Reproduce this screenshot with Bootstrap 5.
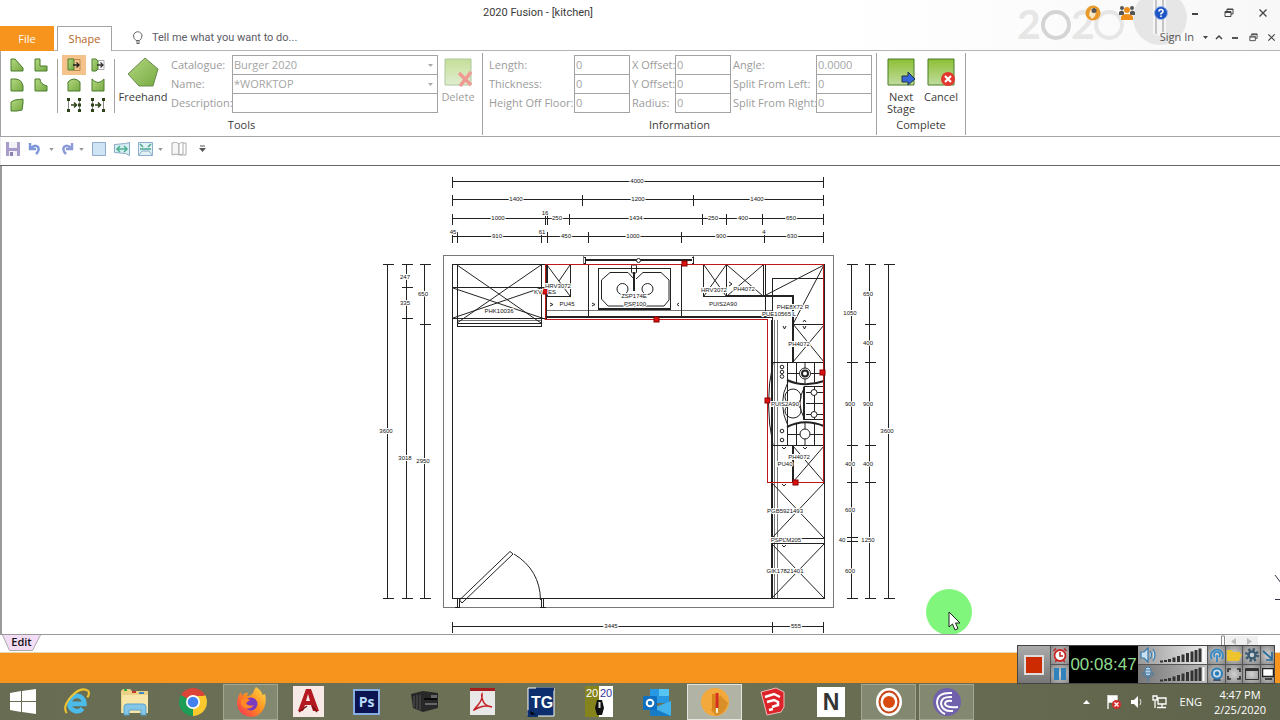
<!DOCTYPE html>
<html lang="en">
<head>
<meta charset="utf-8">
<meta name="viewport" content="width=device-width, initial-scale=1">
<title>2020 Fusion - [kitchen]</title>
<link rel="stylesheet" href="https://cdn.jsdelivr.net/npm/bootstrap@5.3.0/dist/css/bootstrap.min.css">
<style>
:root{--line:#a3a3a3;--dim:#9b9b9b;--orange:#f7941d}
body{font-family:"Open Sans","Noto Sans",sans-serif;font-size:11px;line-height:16px;color:#3b3b3b;background:#fff}
button{font:inherit;color:inherit;background:none;border:0;padding:0;display:inline-flex;align-items:center;justify-content:center;flex-shrink:0}
a{color:inherit;text-decoration:none}
svg{display:block;flex-shrink:0}
.app-head{background:linear-gradient(90deg,#fff 65%,#f8f8f8);position:relative}
.title-row{height:26px}
.title-row .win-title{flex:1;text-align:center}
.win-title,.tell-me{font-family:Roboto,"Open Sans",sans-serif}
.title-row button{width:34px;height:24px}
.watermark{position:absolute;right:90px;top:0}
.tab-row{height:25px;border-bottom:1px solid #b5b5b5}
.tab-file{width:54px;height:25px;background:var(--orange);color:#fff}
.tab-shape{width:55px;height:25px;margin:0 0 -1px 3px;background:#fff;border:1px solid var(--line);border-bottom:0;color:#b5651d}
.tell-me{margin-left:20px;color:#5c5c66}
.tell-me svg{margin-right:4px}
.sign{color:#555}
.sign button{height:22px}
.w14{width:14px}.w18{width:18px}
.ribbon{height:86px;border-bottom:1px solid var(--line);border-left:1px solid var(--line)}
.r-group{position:relative;height:82px;margin-top:2px;border-right:1px solid var(--line);display:flex;flex-direction:column;flex-shrink:0}
.r-body{height:64px;padding-top:2px;display:flex;align-items:flex-start}
.r-label{text-align:center;height:16px}
.tool-grid{display:grid;grid-template-columns:24px 24px;grid-auto-rows:20px}
.tool-grid button{height:20px;width:24px}
.tool-grid .picked{background:#f6c28b}
.v-rule{width:1px;height:54px;background:var(--line);margin-top:4px;flex-shrink:0}
.big-btn{width:40px;flex-direction:column;line-height:12px;justify-content:flex-start;padding-top:2px}
.big-btn svg{margin-bottom:4px}
.big-btn.wide{width:56px}
.field-grid{display:grid;grid-auto-rows:19px;align-items:start;color:var(--dim)}
.field-grid label{line-height:20px;white-space:nowrap}
.field-grid input,.field-grid select{height:20px;width:100%;border:1px solid var(--line);border-radius:0;background:#fff;color:#a5a5a5;padding:0 1px 1px;font:inherit;appearance:none;opacity:1;min-width:0}
.field-grid select{background:#fff url("data:image/svg+xml,%3Csvg xmlns='http://www.w3.org/2000/svg' width='5' height='3'%3E%3Cpath d='M0 0h5L2.500 3z' fill='%23aaa'/%3E%3C/svg%3E") no-repeat right 4px center}
.f-tools{grid-template-columns:61px 206px}
.f-info{grid-template-columns:85px 56px 2px 43px 56px 2px 83px 56px;margin:0 4px 0 6px}
.quick{height:28px;padding:0 5px 4px;border-left:1px solid #eee}
.quick button{height:24px}
.stage{border-top:1px solid #666;border-bottom:1px solid #999;box-shadow:inset 2px 0 #999;position:relative;overflow:hidden;flex:1 0 auto}
.plan{width:100%;height:max(467px,calc(100vh - 253px))}
.plan line,.plan path,.plan rect,.plan circle,.plan ellipse{fill:none;stroke:#222;stroke-width:1}
.plan .crisp *{shape-rendering:crispEdges}
.plan .thin *{stroke:#777}
.plan .diag *{stroke:#222}
.plan .bold *{stroke:#222;stroke-width:2}
.plan .red *{stroke:#c01818}
.plan .grip *{fill:#e01010;stroke:#800}
.plan text{font-family:"Liberation Sans",sans-serif;font-size:6px;fill:#111;text-anchor:middle;paint-order:stroke;stroke:#fff;stroke-width:2px}
.pointer{position:absolute;right:307px;bottom:-2px}
.edge-bit{position:absolute;right:0;bottom:30px}
.sheets{height:17px;padding-left:2px}
.sheet-tab{width:39px;height:17px;color:#111;font-weight:600}
.sheet-tab svg{position:absolute;left:0;top:0}
.sheet-tab span{position:relative;top:-2px}
.scroll-bit{margin-right:22px}
.orange-bar{height:31px;background:var(--orange);border-top:1px solid #e6d9b8}
.task{height:37px;background:linear-gradient(90deg,#686c53,#6e7256 50%,#5e634b);color:#fff}
.task .start{width:46px;margin-right:3px}
.task .apps{gap:3px}
.task .apps button{width:55px;height:36px;border:1px solid transparent}
.task .apps .open{background:#838870;border-color:#a3a792}
.task .apps .front{background:#b1b4a5;border-color:#e4e5df}
.clock{width:52px;line-height:15px;text-align:center;margin-right:14px}
.recorder{position:absolute;right:5px;bottom:36px;height:39px;border:1px solid #444;background:#555}
.recorder button,.meter{background:radial-gradient(#d2d2d2,#858585)}
.rec-stop{width:33px;background:linear-gradient(#aaa,#777)!important;border-right:1px solid #555}
.rec-duo{display:grid;grid-template-rows:18px 18px;gap:1px}
.rec-duo button{width:18px}
.lcd{width:69px;background:#000;color:#90dc90;font:17px/37px "Liberation Sans",sans-serif;text-align:center}
.meter{width:69px;padding-left:2px;display:flex;align-items:center}
.meter.loud{background:linear-gradient(90deg,#999,#eee)}
.meter.mic{background:linear-gradient(90deg,#777,#bbb)}
.rec-grid{display:grid;grid-template:18px 18px/17px 16px 17px 13px;gap:1px;margin-left:1px;overflow:hidden}
</style>
</head>
<body>
<svg width="0" height="0" class="position-absolute" aria-hidden="true">
<defs>
<linearGradient id="gr" x1="0" y1="0" x2="1" y2="1"><stop offset="0" stop-color="#b4d880"/><stop offset="1" stop-color="#76aa43"/></linearGradient>
<linearGradient id="sq" x1="0" y1="0" x2="0" y2="1"><stop offset="0" stop-color="#8dbf35"/><stop offset="1" stop-color="#c1dc9f"/></linearGradient>
<linearGradient id="ff" x1="1" y1="0" x2="0" y2="1"><stop offset="0" stop-color="#ffe14a"/><stop offset=".5" stop-color="#ff8a1e"/><stop offset="1" stop-color="#ef2a5e"/></linearGradient>
<symbol id="restore" viewBox="0 0 10 10"><path d="M3 3V1h6v5H7M1 3.500h6v5H1zM1 4.500h6M3 1.500h6" fill="none" stroke="#444"/></symbol>
<symbol id="cross" viewBox="0 0 10 10"><path d="M1.500 1.500l7 7m0-7l-7 7" fill="none" stroke="#444" stroke-width="1.300"/></symbol>
<symbol id="caret" viewBox="0 0 6 4"><path d="M0 0h6L3 4z" fill="#999"/></symbol>
</defs>
</svg>
<div class="d-flex flex-column min-vh-100 position-relative">

<header class="app-head">
  <svg class="watermark" width="190" height="50" viewBox="1000 0 190 50" aria-hidden="true">
    <circle cx="1160" cy="18" r="27" fill="#e6e6e6"/><path d="M1153 0h13v38l-13-4z" fill="#f5f5f5"/><path d="M1156 0v34M1163 0v32" stroke="#c4c4c4" stroke-width="2"/>
    <g font-family="Lato,sans-serif" font-size="41" font-weight="700" fill="#e6e6e6"><text x="1017" y="39">2</text><text x="1071" y="39">2</text></g>
    <circle cx="1056" cy="25" r="13" fill="none" stroke="#d4d4d4" stroke-width="4"/><circle cx="1109" cy="25" r="13" fill="none" stroke="#e6e6e6" stroke-width="4"/>
  </svg>
  <div class="title-row d-flex align-items-center position-relative">
    <div class="win-title">2020 Fusion - [kitchen]</div>
    <button aria-label="Announcements"><svg width="16" height="16" viewBox="0 0 16 16"><circle cx="8" cy="8" r="7.500" fill="#e99a2b"/><path d="M7 3h4v4l-1 4-3 3-3-4 1-4z" fill="#f8e6c4"/><circle cx="9" cy="5.500" r="2.500" fill="#555"/></svg></button>
    <button aria-label="Community"><svg width="16" height="16" viewBox="0 0 16 16"><g fill="#555"><circle cx="3" cy="3" r="2"/><circle cx="13" cy="3" r="2"/><path d="M0 10V7q3-3 5 0v3zM11 10V7q2-3 5 0v3z"/></g><circle cx="8" cy="5" r="3" fill="#ee8f1c"/><path d="M2 15v-3q1-3 6-3t6 3v3z" fill="#ee8f1c"/></svg></button>
    <button aria-label="Help"><svg width="14" height="14" viewBox="0 0 14 14"><circle cx="7" cy="7" r="6.500" fill="#1d55c4" stroke="#9db8ea"/><path d="M5 5.500q0-2 2-2t2 1.700Q9 6.500 7 7.500v1M7 9.500v1.500" fill="none" stroke="#fff" stroke-width="1.600"/></svg></button>
    <button aria-label="Minimize"><svg width="6" height="6"><path d="M0 4h6" stroke="#444" stroke-width="2"/></svg></button>
    <button aria-label="Restore"><svg width="10" height="10"><use href="#restore"/></svg></button>
    <button aria-label="Close"><svg width="10" height="10"><use href="#cross"/></svg></button>
  </div>
  <nav class="tab-row d-flex align-items-start position-relative">
    <button class="tab-file">File</button>
    <button class="tab-shape">Shape</button>
    <button class="tell-me align-self-center"><svg width="12" height="14" viewBox="0 0 12 14"><path d="M4 9.500Q1.500 7.500 1.500 5a4.200 4.200 0 0 1 8.500 0q0 2.500-2.500 4.500zM4 11h4M4.500 12.500h3" fill="none" stroke="#666"/></svg><span class="ms-1">Tell me what you want to do...</span></button>
    <div class="sign ms-auto d-flex align-items-center">
      <a href="#" class="me-1">Sign In</a>
      <button class="w14" aria-label="Account menu"><svg width="5" height="3"><path d="M0 0h5L2.500 3z" fill="#444"/></svg></button>
      <button class="w14" aria-label="Collapse ribbon"><svg width="8" height="6"><path d="M1 5l3-3 3 3" fill="none" stroke="#444" stroke-width="1.500"/></svg></button>
      <button class="w18" aria-label="Minimize drawing"><svg width="6" height="6"><path d="M0 4h6" stroke="#555" stroke-width="2"/></svg></button>
      <button class="w18" aria-label="Restore drawing"><svg width="9" height="9"><use href="#restore"/></svg></button>
      <button class="w18" aria-label="Close drawing"><svg width="9" height="9"><use href="#cross"/></svg></button>
    </div>
  </nav>
</header>

<section class="ribbon d-flex">
  <div class="r-group">
    <div class="r-body pe-1">
      <div class="tool-grid ms-1">
        <button aria-label="Angled corner"><svg width="14" height="14" viewBox="0 0 14 14"><path d="M1 1h4l8 9v3H1z" fill="url(#gr)" stroke="#4b7c2c"/></svg></button>
        <button aria-label="L shape"><svg width="14" height="14" viewBox="0 0 14 14"><path d="M1 1h5v7h7v5H1z" fill="url(#gr)" stroke="#4b7c2c"/></svg></button>
        <button aria-label="Round corner"><svg width="14" height="14" viewBox="0 0 14 14"><path d="M1 1h5q6 1 7 7v5H1z" fill="url(#gr)" stroke="#4b7c2c"/></svg></button>
        <button aria-label="Scooped corner"><svg width="14" height="14" viewBox="0 0 14 14"><path d="M1 1h5q0 5 7 7v5H1z" fill="url(#gr)" stroke="#4b7c2c"/></svg></button>
        <button aria-label="Free edge"><svg width="14" height="14" viewBox="0 0 14 14"><path d="M1 4l4-2 8-1v4l-1 7-5 1H1z" fill="url(#gr)" stroke="#4b7c2c"/></svg></button>
      </div>
      <div class="v-rule ms-1"></div>
      <div class="tool-grid ms-1">
        <button class="picked" aria-label="Extend side"><svg width="14" height="14" viewBox="0 0 14 14"><path d="M1 1h6v11H1z" fill="url(#gr)" stroke="#4b7c2c"/><path d="M7 1.500h6v11H7" fill="none" stroke="#b88a50"/><path d="M6 7h6M9.500 4.500L12 7 9.500 9.500" fill="none" stroke="#222" stroke-width="1.300"/></svg></button>
        <button aria-label="Extend angled side"><svg width="14" height="14" viewBox="0 0 14 14"><path d="M1 1h4l2 2v8l-2 2H1z" fill="url(#gr)" stroke="#4b7c2c"/><path d="M7 2.500h6v9H7" fill="none" stroke="#aaa"/><path d="M6 7h6M9.500 4.500L12 7 9.500 9.500" fill="none" stroke="#333" stroke-width="1.300"/></svg></button>
        <button aria-label="Convex edge"><svg width="14" height="14" viewBox="0 0 14 14"><path d="M1 13V4q6-6 12 0v9z" fill="url(#gr)" stroke="#4b7c2c"/></svg></button>
        <button aria-label="Concave edge"><svg width="14" height="14" viewBox="0 0 14 14"><path d="M1 13V1q6 7 12 0v12z" fill="url(#gr)" stroke="#4b7c2c"/></svg></button>
        <button aria-label="Move points"><svg width="14" height="14" viewBox="0 0 14 14"><path d="M1.500 1v12M12.500 1v12" stroke="#888"/><path d="M4 7h5M7 4.500L9.500 7 7 9.500" fill="none" stroke="#2d4319" stroke-width="1.500"/><path d="M0 0h3v3H0zM0 11h3v3H0zM11 0h3v3h-3zM11 11h3v3h-3zM11 5.500h3v3h-3z" fill="#2d4319"/></svg></button>
        <button aria-label="Move side"><svg width="14" height="14" viewBox="0 0 14 14"><path d="M1.500 1v12M12.500 1v12" stroke="#888"/><path d="M4 7h5M7 4.500L9.500 7 7 9.500" fill="none" stroke="#2d4319" stroke-width="1.500"/><path d="M0 0h3v3H0zM0 11h3v3H0zM11 0h3v3h-3zM11 11h3v3h-3zM0 5.500h3v3H0z" fill="#2d4319"/></svg></button>
      </div>
      <div class="v-rule ms-1"></div>
      <button class="big-btn wide"><svg width="32" height="30" viewBox="0 0 32 30"><path d="M18 1L31 12 26 29H12L1 17z" fill="url(#gr)" stroke="#6a8a50"/></svg>Freehand</button>
      <div class="field-grid f-tools">
        <label for="cat">Catalogue:</label><select id="cat" disabled><option>Burger 2020</option></select>
        <label for="nam">Name:</label><select id="nam" disabled><option>*WORKTOP</option></select>
        <label for="des">Description:</label><input id="des" disabled>
      </div>
      <button class="big-btn opacity-50"><svg width="28" height="30" viewBox="0 0 28 30"><path d="M1 2h26v26H1z" fill="url(#sq)" stroke="#5f9040"/><path d="M15 16l12 12M27 15L16 29" stroke="#e0362e" stroke-width="3.500"/></svg>Delete</button>
    </div>
    <div class="r-label">Tools</div>
  </div>
  <div class="r-group">
    <div class="r-body">
      <div class="field-grid f-info">
        <label for="len">Length:</label><input id="len" value="0" disabled><i></i>
        <label for="xo">X Offset:</label><input id="xo" value="0" disabled><i></i>
        <label for="ang">Angle:</label><input id="ang" value="0.0000" disabled>
        <label for="thi">Thickness:</label><input id="thi" value="0" disabled><i></i>
        <label for="yo">Y Offset:</label><input id="yo" value="0" disabled><i></i>
        <label for="sl">Split From Left:</label><input id="sl" value="0" disabled>
        <label for="hof">Height Off Floor:</label><input id="hof" value="0" disabled><i></i>
        <label for="rad">Radius:</label><input id="rad" value="0" disabled><i></i>
        <label for="sr">Split From Right:</label><input id="sr" value="0" disabled>
      </div>
    </div>
    <div class="r-label">Information</div>
  </div>
  <div class="r-group">
    <div class="r-body px-1">
      <button class="big-btn"><svg width="28" height="30" viewBox="0 0 28 30"><path d="M1 2h26v26H1z" fill="url(#sq)" stroke="#467c27"/><path d="M15 19h6v-4l7 7-7 6v-3h-6z" fill="#3567d6" stroke="#234"/></svg>Next<br>Stage</button>
      <button class="big-btn"><svg width="28" height="30" viewBox="0 0 28 30"><path d="M1 2h26v26H1z" fill="url(#sq)" stroke="#467c27"/><circle cx="21" cy="22" r="7" fill="#e2372c"/><path d="M18 19l6 6m0-6l-6 6" stroke="#fff" stroke-width="2.200"/></svg>Cancel</button>
    </div>
    <div class="r-label">Complete</div>
  </div>
</section>

<nav class="quick d-flex align-items-center" aria-label="Quick access">
  <button class="w14" aria-label="Save"><svg width="14" height="14" viewBox="0 0 14 14"><path d="M0 0h14v14H0z" fill="#a99cc8"/><path d="M3 0h8v6H3zM3 9h8v5H3z" fill="#f3f1f8"/><path d="M4 10h3v4H4z" fill="#8c80b0"/></svg></button>
  <button class="ms-2" aria-label="Undo"><svg width="14" height="14" viewBox="0 0 14 14"><path d="M2 1v6h6M3 6q4-4 7-1 2 3-2 7" fill="none" stroke="#7f98d8" stroke-width="2.500"/></svg></button>
  <button class="w18" aria-label="Undo list"><svg width="5" height="3"><use href="#caret"/></svg></button>
  <button aria-label="Redo"><svg width="14" height="14" viewBox="0 0 14 14"><path d="M12 1v6H6M11 6q-4-4-7-1-2 3 2 7" fill="none" stroke="#8b9cd8" stroke-width="2.500"/></svg></button>
  <button class="w14" aria-label="Redo list"><svg width="5" height="3"><use href="#caret"/></svg></button>
  <button class="ms-1" aria-label="Zoom window"><svg width="14" height="14" viewBox="0 0 14 14"><path d="M.5.5h13v13H.5z" fill="#cfe4f5" stroke="#8fa9cf"/></svg></button>
  <button class="ms-2" aria-label="Pan"><svg width="16" height="14" viewBox="0 0 16 14"><path d="M.5 2.500l11-1 4-1v13l-4-2-11-1z" fill="#d5eef0" stroke="#8aa9c4"/><path d="M3 7h9M6 4L3 7l3 3M10 4l3 3-3 3" fill="none" stroke="#4cae93" stroke-width="1.500"/></svg></button>
  <button class="ms-2" aria-label="Zoom extents"><svg width="15" height="14" viewBox="0 0 15 14"><path d="M.5.500h14v13H.5z" fill="#e2f2f4" stroke="#8aaecb"/><path d="M2 2l3 3m8-3l-3 3M2 7h11" fill="none" stroke="#4aa68f" stroke-width="1.500"/><path d="M1 13l3-4h7l3 4" fill="none" stroke="#8aaecb"/></svg></button>
  <button class="w14" aria-label="Zoom list"><svg width="5" height="3"><use href="#caret"/></svg></button>
  <button class="ms-1" aria-label="Catalogue"><svg width="16" height="14" viewBox="0 0 16 14"><path d="M1 1l4-1 3 2v11l-3-1-4 1z" fill="#f6f6f6" stroke="#aaa"/><path d="M8 2l3-2h1v12l-4 1zM12 1h3v12H9" fill="#fff" stroke="#aaa"/></svg></button>
  <button class="ms-2 ps-1" aria-label="Customize"><svg width="7" height="8"><path d="M1 1h5" stroke="#555"/><path d="M0 3h7L3.500 7z" fill="#555"/></svg></button>
</nav>

<main class="stage">
<svg class="plan" viewBox="375 166 530 467" preserveAspectRatio="xMidYMin meet" role="img" aria-label="Kitchen plan">
  <g class="crisp thin"><rect x="443.500" y="255.500" width="390" height="352"/><path d="M547 310.500H772M777.500 320V598M774.500 320V598M457 320.500H541M583.500 255v9M693.500 255v9"/></g>
  <g class="crisp">
    <path d="M452.500 264.500H824.500V598.500H452.500z"/>
    <path d="M457.500 264V326.500H541.500V264M453 287.500H545M453 318.500H545M457 323.500H541M547.500 264.500V296.500H570.500V264M588.500 264V317M681.500 264V317M703.500 264V296.500H727M726.500 264V296M763.500 264V296M765.500 264V313M772.500 598V278.500H824M793 324.500H824M772 362.500H824M772 445.500H824M772 482.500H824M772 538.500H824M772 543.500H824M787.500 363V445M583.500 257h2v6h-2M691.500 257h2v6h-2"/>
    <path d="M598.500 309V268.500H670.500V309"/>
  </g>
  <g class="crisp bold"><path d="M585 260H692M547 317H772M598 309H671M727 296H793V363M793 446V482M772 320V598M634 272V291M546 264V320"/></g>
  <g class="diag">
    <path d="M457 265L541 323M541 265L457 323M453 288L545 319M453 318L541 288M547 265L570 296M570 265L559 281M704 265L726 296M726 265L704 296M727 265L763 296M763 265L727 296M764 296L824 265L793 324L824 362M824 325L793 362M793 446L824 482M824 446L793 482M772 483L824 538M824 483L772 538M772 544L824 598M824 544L772 598"/>
    <path d="M601.500 280L610 272.500H628L634 279M601.500 280V299L608 306H664L669 300V280L661 272.500H643L636 279"/>
    <circle cx="622.500" cy="289" r="5.500"/><circle cx="647.500" cy="289" r="5.500"/><rect x="631.500" y="265" width="5" height="8" rx="1"/>
  </g>
  <circle cx="638.500" cy="260.500" r="2" style="fill:#fff"/>
  <!-- hob -->
  <g class="diag">
    <path d="M796.500 363V383M814.500 363V382M805 363V383M787 373.500H824M787 434.500H824M796.500 424V445M805 422V445M814.500 386V420M814.500 424V445M806 392.500H824M806 403.500H824M806 414.500H824M824 386.500H804V419.500H824"/>
    <circle cx="805" cy="373.500" r="5.500" style="fill:#fff"/><circle cx="805" cy="373.500" r="3" style="stroke-width:2"/><circle cx="805" cy="434" r="5" style="fill:#fff"/>
    <circle cx="814" cy="392.500" r="3" style="fill:#fff"/><circle cx="814" cy="414.500" r="3" style="fill:#fff"/>
    <ellipse cx="793" cy="397" rx="8" ry="8"/><ellipse cx="793" cy="411" rx="8" ry="7"/>
    <path d="M788 382Q777 403 788 426M773 363Q764 403 773 445M804 388Q796 403 804 418"/>
    <circle cx="782" cy="367" r="1.800"/><circle cx="782" cy="372" r="1.800"/><circle cx="782" cy="376.500" r="1.800"/><circle cx="782" cy="431" r="1.800"/><circle cx="782" cy="440" r="1.800"/>
  </g>
  <g class="bold"><path d="M787 380Q804 388 824 381M787 427Q804 418 824 426M804 387V420"/></g>
  <path d="M550 303l3 1.500-3 1.500M592 303l3 1.500-3 1.500M679 303l-2 1.500 2 1.500M729 282l3 2-3 2M783 326l1.500 3 1.500-3M803 322l1.500-2 1.500 2M803 326l1.500 3 1.500-3M782 447l2 2 2-2M803 447l2 2 2-2M782 484l2 2 2-2M782 545l2 2 2-2"/>
  <!-- door -->
  <g class="diag"><path d="M459.500 600L510 551.500L513 554L462 603zM514 554Q540 570 540.500 600"/></g>
  <g class="crisp"><path d="M455 598.500h5M455 607.500h5M457.500 598v10M459 598v10M540 598.500h5M540 607.500h6M541.500 598v10M543.500 598v10"/></g>
  <g class="crisp red"><path d="M545.500 264.500H823.500V482.500H767.500V319.500H545.500z"/></g>
  <g class="grip"><rect x="682" y="261" width="5" height="5"/><rect x="543" y="289" width="5" height="5"/><rect x="654" y="317" width="5" height="5"/><rect x="820" y="370" width="5" height="5"/><rect x="765" y="398" width="5" height="5"/><rect x="793" y="480" width="5" height="5"/></g>
  <g id="dims" class="crisp"></g>
  <g>
    <text x="499" y="313">PHK10036</text><text x="538" y="294">KV</text><text x="552" y="294">ES</text><text x="558" y="288">HRV3072</text><text x="567" y="306">PU45</text><text x="634" y="298">ZSP174E</text><text x="635" y="306">PSP100</text><text x="723" y="306">PUIS2A90</text><text x="714" y="292">HRV3072</text><text x="744" y="291">PH4072</text><text x="793" y="309">PHE8X72 R</text><text x="779" y="316">PUE10565 L</text><text x="799" y="346">PH4072</text><text x="785" y="406">PUIS2A90</text><text x="799" y="459">PH4072</text><text x="785" y="466">PU40</text><text x="785" y="513">PGB5921493</text><text x="786" y="542">PSPLM205</text><text x="785" y="573">GIK17821401</text>
  </g>
</svg>
<svg class="pointer" width="48" height="48" viewBox="0 0 48 48" aria-hidden="true"><circle cx="24" cy="24" r="23" fill="#80f77c"/><path d="M24 24v15l3.500-3 2.500 6 3-1.500-2.500-5.500h4.500z" fill="#fff" stroke="#222"/></svg>
<svg class="edge-bit" width="6" height="34" aria-hidden="true"><path d="M1 5l6 8M1 29.500h5" stroke="#334" fill="none"/></svg>
</main>

<div class="sheets d-flex justify-content-between">
  <button class="sheet-tab position-relative"><svg width="39" height="17"><path d="M.5 0l7 15.500h23l8-15.500" fill="#f3dcf5" stroke="#aaa"/></svg><span>Edit</span></button>
  <svg class="scroll-bit" width="37" height="12" aria-hidden="true"><path d="M.5 1h3v11h-3z" fill="#fff" stroke="#888"/><path d="M5 1h32v11H5z" fill="#f0f0f0"/><path d="M15 3v7l-5-3.500zM26 3v7l5-3.500z" fill="#bbb"/></svg>
</div>
<div class="orange-bar"></div>

<div class="recorder d-flex" role="toolbar" aria-label="Recorder">
  <button class="rec-stop" aria-label="Stop"><svg width="20" height="20"><path d="M1 1h18v18H1z" fill="#cc2a00" stroke="#ddd" stroke-width="2"/></svg></button>
  <div class="rec-duo">
    <button aria-label="Schedule"><svg width="16" height="16" viewBox="0 0 16 16"><circle cx="8" cy="8.500" r="5.500" fill="#fff" stroke="#c22" stroke-width="1.800"/><path d="M8 5v4h3M1.500 4L4 1.500M12 1.500L14.500 4M3 15l2-2m8 2l-2-2" stroke="#b22" stroke-width="1.500" fill="none"/></svg></button>
    <button aria-label="Pause"><svg width="12" height="12"><path d="M0 0h5v12H0zM7 0h5v12H7z" fill="#3181ba"/></svg></button>
  </div>
  <div class="lcd">00:08:47</div>
  <div class="rec-duo">
    <div class="meter loud"><svg width="66" height="16" viewBox="0 0 66 16"><path d="M1 5h3l4-4v14l-4-4H1zM10 4q3 4 0 8M13 2q4 6 0 12" fill="#cbe1f2" stroke="#367aac" stroke-width="1.200"/><path d="M20 14.500h3M24 14h3" stroke="#333" stroke-width="2"/><path d="M29.500 12v3M34 10.500v4.500M38.500 9v6M43 7.500v7.500M47.500 6v9M52 4.500v10.500M56 3v12M60 1.500v13.500" stroke="#333" stroke-width="3"/><path d="M63.500 1v14" stroke="#fff" stroke-width="2"/></svg></div>
    <div class="meter mic"><svg width="66" height="16" viewBox="0 0 66 16"><rect x="5" y="1" width="6" height="9" rx="3" fill="#b9d4e8" stroke="#477ba3"/><path d="M3 6v3q5 5 10 0V6M8 12v4M5 4h6M5 7h6" fill="none" stroke="#477ba3"/><path d="M20 14.500h3M24 14h3" stroke="#333" stroke-width="2"/><path d="M29.500 12v3M34 10.500v4.500M38.500 9v6M43 7.500v7.500M47.500 6v9M52 4.500v10.500M56 3v12M60 1.500v13.500" stroke="#333" stroke-width="3"/><path d="M63.500 1v14" stroke="#fff" stroke-width="2"/></svg></div>
  </div>
  <div class="rec-grid">
    <button aria-label="Broadcast"><svg width="14" height="14" viewBox="0 0 14 14"><path d="M2 11a6 6 0 1 1 10 0M5 9a3 3 0 1 1 4 0M7 7v7" fill="none" stroke="#2a87c8" stroke-width="1.700"/></svg></button>
    <button aria-label="Folder"><svg width="15" height="12" viewBox="0 0 15 12"><path d="M0 1h5l1 2h7v2h2l-3 7H0z" fill="#eec42e"/></svg></button>
    <button aria-label="Settings"><svg width="14" height="14" viewBox="0 0 14 14"><circle cx="7" cy="7" r="5.500" fill="none" stroke="#3c5a70" stroke-width="3" stroke-dasharray="2.300 2"/><circle cx="7" cy="7" r="3.500" fill="#c8d0d5" stroke="#3c5a70" stroke-width="2.500"/></svg></button>
    <button aria-label="Shrink"><svg width="11" height="12"><path d="M1 2l9 8M10 3v8H4" fill="none" stroke="#2b6d9b" stroke-width="1.700"/></svg></button>
    <button aria-label="Webcam"><svg width="14" height="14" viewBox="0 0 14 14"><path d="M3 14l1-3h6l1 3z" fill="#456"/><circle cx="7" cy="6.500" r="5" fill="#cde" stroke="#2a7cb5" stroke-width="2"/><circle cx="7" cy="6.500" r="2.200" fill="#2a7cb5"/></svg></button>
    <button aria-label="Full region"><svg width="14" height="12"><path d="M1 4V1h3M10 1h3v3M13 8v3h-3M4 11H1V8" fill="none" stroke="#333" stroke-width="1.700"/></svg></button>
    <button aria-label="Window region"><svg width="14" height="12"><path d="M.5.500h13v11H.5z" fill="none" stroke="#333"/><path d="M1 1.500h12" stroke="#333" stroke-width="3"/></svg></button>
    <button aria-label="Screen"><svg width="12" height="12"><path d="M.5.500h11v8H.5zM3 11h7" fill="#fff" stroke="#222" stroke-width="1.500"/></svg></button>
  </div>
</div>

<footer class="task d-flex align-items-center">
  <button class="start" aria-label="Start"><svg width="26" height="25" viewBox="0 0 26 25"><path d="M0 4l11-2v10H0zM12 2l14-2v12H12zM0 13h11v10L0 21zM12 13h14v12l-14-2z" fill="#fff"/></svg></button>
  <div class="apps d-flex">
    <button aria-label="Internet Explorer"><svg width="28" height="28" viewBox="0 0 30 30"><path d="M8 17h15a8 8 0 0 0-16-1 8 8 0 0 0 14 6" fill="none" stroke="#4bbcea" stroke-width="5"/><path d="M4 27Q-1 20 9 9T27 3q2 3-1 7" fill="none" stroke="#f2c42d" stroke-width="2.200"/></svg></button>
    <button aria-label="File Explorer"><svg width="30" height="28" viewBox="0 0 30 28"><path d="M1 3l2-2h7l2 2h16v22H1z" fill="#ecd083"/><path d="M2 7h26v18H2z" fill="#f8e6a8"/><path d="M4 2h3" stroke="#3a4" stroke-width="2"/><path d="M12 4h4" stroke="#c33" stroke-width="2"/><path d="M19 5h5" stroke="#48c" stroke-width="2"/><path d="M4 27v-8q0-3 3-3h16q3 0 3 3v8h-5v-5H9v5z" fill="#84c6e8" stroke="#5aa3cb"/></svg></button>
    <button aria-label="Chrome"><svg width="28" height="28" viewBox="0 0 28 28"><path d="M14 14L1.900 7A14 14 0 0 1 26.100 7z" fill="#dc4437"/><path d="M14 14L26.100 7A14 14 0 0 1 14 28z" fill="#fbc92d"/><path d="M14 14v14A14 14 0 0 1 1.900 7z" fill="#1e9d57"/><path d="M14 8h12.600q3 9-4 16L14 28l6-10z" fill="#fbc92d"/><circle cx="14" cy="14" r="7" fill="#fff"/><circle cx="14" cy="14" r="5.300" fill="#4381f0"/></svg></button>
    <button class="open" aria-label="Firefox"><svg width="30" height="30" viewBox="0 0 30 30"><path d="M1 17Q1 10 5 5l1 4q3-4 6-3l-1 3q3 1 6-3 2-5 3-6 7 5 6 8l3-1q2 8-1 14a14 14 0 0 1-27-4z" fill="url(#ff)"/><circle cx="15" cy="17" r="6.500" fill="#7b3bc0"/><path d="M5 13q5-3 9 0l-4 3q2 4 8 2-4 5-9 3t-4-8z" fill="#ff8926"/></svg></button>
    <button aria-label="AutoCAD"><svg width="31" height="31" viewBox="0 0 31 31"><path d="M0 0h31v31H0z" fill="#f7e9e5"/><path d="M5 25L13 3h5l8 22h-6l-2-6h-6l-2 6zM13 15h4l-2-7z" fill="#b3191e" fill-rule="evenodd"/><path d="M6 26l8-6M19 20l5 6" stroke="#761216" stroke-width="1.500"/></svg></button>
    <button aria-label="Photoshop"><svg width="27" height="26" viewBox="0 0 27 26"><path d="M1 1h25v24H1z" fill="#0b1350" stroke="#86aee0" stroke-width="2"/><text x="13.500" y="18" text-anchor="middle" font-size="14" font-weight="bold" font-family="Open Sans,sans-serif" fill="#b6dcfa">Ps</text></svg></button>
    <button aria-label="Scanner"><svg width="28" height="22" viewBox="0 0 28 22"><path d="M0 3l12-3 15 2v15l-15 4-10-4z" fill="#282828"/><path d="M3 5v11M6 4v14M9 4v15" stroke="#555"/><path d="M14 12h12v2H14zM20 4h6v4h-6z" fill="#666"/><path d="M13 8h13" stroke="#090909" stroke-width="2"/></svg></button>
    <button aria-label="Acrobat"><svg width="25" height="27" viewBox="0 0 25 27"><path d="M0 0h25v27H0z" fill="#e8e8e8"/><path d="M0 0h25v3H0z" fill="#a51d1d"/><path d="M12 6q-1 2 1 7T22 19Q14 16 4 22 3 23 8 17T12 6z" fill="none" stroke="#c22127" stroke-width="1.500"/></svg></button>
    <button aria-label="TG"><svg width="28" height="30" viewBox="0 0 28 30"><path d="M1 1h26v28H1z" fill="#0d2f6d" stroke="#fff"/><path d="M9 2h18M2 23v6h9" stroke="#0d2f6d" stroke-width="3"/><text x="15" y="21" text-anchor="middle" font-size="16" font-weight="bold" font-family="Liberation Sans,sans-serif" fill="#fff">TG</text></svg></button>
    <button aria-label="2020"><svg width="28" height="31" viewBox="0 0 28 31"><path d="M0 0h14v31H0z" fill="#85831b"/><path d="M14 0h14v31H14z" fill="#fff"/><text x="1" y="11" font-size="11" font-family="Liberation Sans,sans-serif" fill="#fff">20</text><text x="15" y="11" font-size="11" font-family="Liberation Sans,sans-serif" fill="#33339c">20</text><path d="M12 14h5l2 8-2 7h-5l-2-7z" fill="#111"/><path d="M14.500 16v6" stroke="#ddd" stroke-width="2"/></svg></button>
    <button aria-label="Outlook"><svg width="28" height="28" viewBox="0 0 28 28"><path d="M7 1h19v14H7z" fill="#2799e4"/><path d="M16 1h10v7H16z" fill="#57c5f4"/><path d="M7 15l10 6 11-8v15H7z" fill="#187bc5"/><path d="M28 13v15L10 20z" fill="#43b3ec"/><rect x="0" y="8" width="14" height="14" rx="1" fill="#0f6fc0"/><circle cx="7" cy="15" r="3.300" fill="none" stroke="#fff" stroke-width="2"/></svg></button>
    <button class="front" aria-label="2020 Fusion"><svg width="28" height="30" viewBox="0 0 28 30"><circle cx="14" cy="15" r="14" fill="#f3a93b"/><path d="M19 8l8 8q-3 11-12 13l-5-6z" fill="#d98e28"/><path d="M11 7h3v17h-3z" fill="#d88418"/><path d="M16 6v15" stroke="#d62d21" stroke-width="3"/><path d="M16 21v5" stroke="#f8eccb" stroke-width="2"/></svg></button>
    <button aria-label="SketchUp"><svg width="25" height="29" viewBox="0 0 25 29"><path d="M1 5l15-4 8 4v15l-3 5-14 3z" fill="#db2329" stroke="#eebcbc"/><path d="M5 10l9-3 6 3M7 15l7-2 4 2v3l-6 2M9 23l4-1" fill="none" stroke="#fff" stroke-width="2.500"/></svg></button>
    <button aria-label="N"><svg width="28" height="30" viewBox="0 0 28 30"><path d="M0 0h28v30H0z" fill="#fff"/><text x="14" y="23" text-anchor="middle" font-size="23" font-weight="bold" font-family="Liberation Sans,sans-serif" fill="#333">N</text></svg></button>
    <button class="open" aria-label="Screen recorder"><svg width="28" height="30" viewBox="0 0 28 30"><ellipse cx="14" cy="15" rx="13" ry="14" fill="#fff"/><ellipse cx="14" cy="15" rx="9.500" ry="10.500" fill="none" stroke="#c84718" stroke-width="2"/><circle cx="14" cy="15" r="6" fill="#d94a0e"/></svg></button>
    <button class="open" aria-label="BitTorrent"><svg width="28" height="30" viewBox="0 0 28 30"><circle cx="14" cy="15" r="14" fill="#7160ac"/><path d="M19 6Q4 5 4 16q1 8 8 11M19 10Q8 9 8 17q2 8 12 7M19 14q-7-1-7 3 1 4 13 3" fill="none" stroke="#fff" stroke-width="2"/></svg></button>
  </div>
  <div class="ms-auto d-flex align-items-center">
    <svg class="me-3" width="7" height="4"><path d="M0 4h7L3.500 0z" fill="#fff"/></svg>
    <svg class="me-2" width="16" height="16" viewBox="0 0 16 16"><path d="M2 1v14M3 2h8v6H3z" fill="#fff" stroke="#fff" stroke-width="1.300"/><circle cx="10.500" cy="10.500" r="4.500" fill="#d22c2c"/><path d="M8.500 8.500l4 4m0-4l-4 4" stroke="#fff" stroke-width="1.300"/></svg>
    <svg class="me-2" width="14" height="14" viewBox="0 0 14 14"><path d="M1 5h3l4-4v12L4 9H1z" fill="#fff"/><path d="M10 4q2 3 0 6" fill="none" stroke="#ddd"/></svg>
    <svg class="me-2" width="16" height="14" viewBox="0 0 16 14"><path d="M6 3h8v6H6zM10 9v3M5 12.500h9M3 6v7M1 1h4v4H1z" fill="none" stroke="#fff" stroke-width="1.300"/></svg>
    <span class="ms-1 me-2 pe-1">ENG</span>
    <div class="clock">4:47 PM<br>2/25/2020</div>
  </div>
</footer>
</div>
<script>
// Dimension chains: h = horizontal, v = vertical; at = line position, t = tick marks, l = [label, position, cross position?]
const chains=[
 {d:'h',at:181,t:[452,823],l:[['4000',637]]},
 {d:'h',at:199,t:[452,582,693,823],l:[['1400',516],['1200',638],['1400',757]]},
 {d:'h',at:218,t:[452,545,547,569,702,726,762,823],l:[['1000',498],['16',545,213],['250',557],['1434',636],['250',713],['400',743],['650',791]]},
 {d:'h',at:236,t:[452,457,541,547,588,681,764,823],l:[['45',453,232],['910',497],['61',542,232],['450',566],['1000',633],['900',721],['4',764,232],['630',792]]},
 {d:'h',at:626,t:[452,772,823],l:[['3445',611],['555',796]]},
 {d:'v',at:387,t:[264,598],l:[['3600',431]]},
 {d:'v',at:406,t:[264,287,318,598],l:[['247',277],['335',303],['3018',458]]},
 {d:'v',at:424,t:[264,324,598],l:[['650',294],['2950',461]]},
 {d:'v',at:851,t:[264,362,445,482,537,541,598],l:[['1050',313],['900',404],['400',464],['600',510],['40',540,842],['600',571]]},
 {d:'v',at:869,t:[264,324,362,445,482,598],l:[['650',294],['400',343],['900',404],['400',464],['1250',540]]},
 {d:'v',at:888,t:[264,598],l:[['3600',431]]}];
let out='';
for(const c of chains){
 const a=c.at+.5,s=c.t[0]+.5,e=c.t[c.t.length-1]+.5;
 out+=c.d==='h'?`<path d="M${s} ${a}H${e}"/>`:`<path d="M${a} ${s}V${e}"/>`;
 for(const t of c.t)out+=c.d==='h'?`<path d="M${t+.5} ${a-5}v11"/>`:`<path d="M${a-5} ${t+.5}h11"/>`;
 for(const [s,p,o] of c.l)out+=c.d==='h'?`<text x="${p}" y="${(o||c.at)+2}">${s}</text>`:`<text x="${o||c.at-1}" y="${p+2}">${s}</text>`;
}
document.getElementById('dims').innerHTML=out;
</script>
<script src="https://cdn.jsdelivr.net/npm/bootstrap@5.3.0/dist/js/bootstrap.bundle.min.js"></script>
</body>
</html>
